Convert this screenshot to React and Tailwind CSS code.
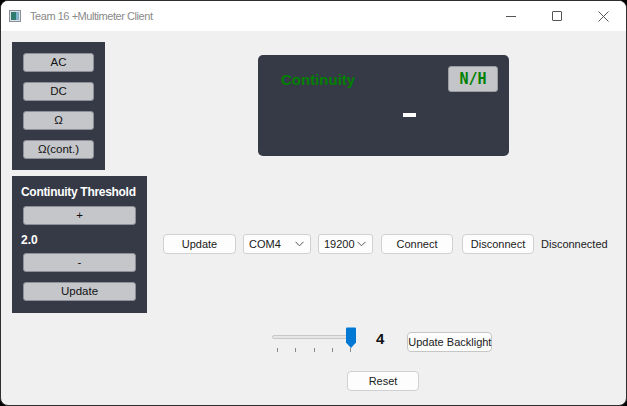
import React from "react";

const font = "font-['Liberation_Sans',Arial,sans-serif]";

function PanelButton({ children, w = "w-[71px]" }) {
  return (
    <div className={`${w} h-[19px] rounded-[3px] bg-[#c5c6ca] border border-[#8e9099] flex items-center justify-center text-[11.5px] text-[#111]`}>
      {children}
    </div>
  );
}

function WinButton({ children, w }) {
  return (
    <div className={`${w} h-[20px] rounded-[4px] bg-[#fdfdfd] border border-[#d0d0d0] flex items-center justify-center text-[11px] text-[#1a1a1a]`}>
      {children}
    </div>
  );
}

function Combo({ value, w }) {
  return (
    <div className={`${w} h-[20px] rounded-[3px] bg-[#fdfdfd] border border-[#d0d0d0] flex items-center justify-between pl-[5px] pr-[6px] text-[11px] text-[#1a1a1a]`}>
      <span>{value}</span>
      <svg width="9" height="6" viewBox="0 0 9 6" fill="none">
        <path d="M0.5 0.8 L4.5 4.8 L8.5 0.8" stroke="#555" strokeWidth="1" />
      </svg>
    </div>
  );
}

export default function App() {
  return (
    <div className={`w-[627px] h-[406px] bg-black ${font}`}>
      <div className="w-full h-full rounded-[8px] border border-[#2e2e2e] overflow-hidden flex flex-col bg-[#f0f0f0]">
        {/* title bar */}
        <div className="h-[30px] bg-white flex items-center shrink-0">
          <svg className="ml-[8px]" width="12" height="12" viewBox="0 0 12 12">
            <rect x="0.5" y="0.5" width="11" height="11" fill="#dfe3e8" stroke="#8a9099" />
            <rect x="2" y="2" width="5" height="8" fill="#2f7c6e" />
            <rect x="7" y="2" width="3" height="8" fill="#7fb1c9" />
          </svg>
          <span className="ml-[9px] text-[11px] tracking-[-0.45px] text-[#8a8a8a]">Team 16 +Multimeter Client</span>
          <div className="ml-auto flex items-center">
            <div className="w-[46px] h-[30px] flex items-center justify-center">
              <div className="w-[10px] h-px bg-[#555]" />
            </div>
            <div className="w-[46px] h-[30px] flex items-center justify-center">
              <div className="w-[10px] h-[10px] border border-[#555] rounded-[1px]" />
            </div>
            <div className="w-[46px] h-[30px] flex items-center justify-center">
              <svg width="11" height="11" viewBox="0 0 11 11">
                <path d="M0.5 0.5 L10.5 10.5 M10.5 0.5 L0.5 10.5" stroke="#555" strokeWidth="1" />
              </svg>
            </div>
          </div>
        </div>

        {/* body */}
        <div className="flex flex-1">
          {/* left column */}
          <div className="ml-[11px] mt-[11px] flex flex-col items-start gap-[6px]">
            <div className="w-[93px] h-[128px] bg-[#363a47] flex flex-col gap-[10px] pt-[11px] pl-[11px]">
              <PanelButton>AC</PanelButton>
              <PanelButton>DC</PanelButton>
              <PanelButton>Ω</PanelButton>
              <PanelButton>Ω(cont.)</PanelButton>
            </div>
            <div className="w-[135px] h-[137px] bg-[#363a47] flex flex-col pl-[11px] pt-[8px]">
              <div className="ml-[-2px] text-[12px] font-bold text-white leading-[16px] tracking-[-0.3px]">Continuity Threshold</div>
              <div className="mt-[6px]"><PanelButton w="w-[113px]">+</PanelButton></div>
              <div className="mt-[7px] text-[12px] font-bold text-white leading-[16px] ml-[-2px]">2.0</div>
              <div className="mt-[5px]"><PanelButton w="w-[113px]">-</PanelButton></div>
              <div className="mt-[10px]"><PanelButton w="w-[113px]">Update</PanelButton></div>
            </div>
          </div>

          {/* right area */}
          <div className="flex flex-col ml-[15px] mt-[24px]">
            <div className="ml-[96px] w-[251px] h-[101px] rounded-[5px] bg-[#363a47] flex flex-col">
              <div className="flex items-start">
                <span className="ml-[23px] mt-[15px] text-[15px] font-bold text-[#008000] leading-[20px]">Continuity</span>
                <div className="ml-auto mr-[11px] mt-[11px] w-[50px] h-[26px] rounded-[3px] bg-[#c4c5c8] border border-[#9a9ca3] flex items-center justify-center font-['DejaVu_Sans_Mono',monospace] font-bold text-[15px] text-[#008000]">
                  N/H
                </div>
              </div>
              <div className="ml-[145px] mt-[21px] w-[13px] h-[4px] bg-white" />
            </div>

            <div className="flex items-center mt-[78px] ml-[1px]">
              <WinButton w="w-[73px]">Update</WinButton>
              <div className="ml-[7px]"><Combo value="COM4" w="w-[68px]" /></div>
              <div className="ml-[7px]"><Combo value="19200" w="w-[55px]" /></div>
              <div className="ml-[8px]"><WinButton w="w-[72px]">Connect</WinButton></div>
              <div className="ml-[9px]"><WinButton w="w-[72px]">Disconnect</WinButton></div>
              <span className="ml-[7px] text-[11px] text-[#1a1a1a]">Disconnected</span>
            </div>

            <div className="flex items-start mt-[73px] ml-[110px]">
              <div className="relative w-[86px] h-[28px]">
                <div className="absolute left-0 top-[8px] w-[84px] h-[4px] rounded-full bg-[#e6e6e6] border border-[#c8c8c8]" />
                <svg className="absolute left-[73px] top-0" width="12" height="22" viewBox="0 0 12 22">
                  <path d="M1 1.5 Q1 0.5 2 0.5 H10 Q11 0.5 11 1.5 V15.5 L6 21 L1 15.5 Z" fill="#0078d4" />
                </svg>
                {[5, 23, 42, 60, 78].map((x) => (
                  <div key={x} className="absolute top-[21px] w-px h-[4px] bg-[#8a8a8a]" style={{ left: x }} />
                ))}
              </div>
              <span className="ml-[18px] mt-[2px] text-[15px] font-bold text-[#111] leading-[20px]">4</span>
              <div className="ml-[23px] mt-[5px] w-[85px] h-[20px] rounded-[4px] bg-[#fdfdfd] border border-[#c6c6c6] flex items-center justify-center text-[11px] text-[#1a1a1a] whitespace-nowrap">
                Update Backlight
              </div>
            </div>

            <div className="mt-[16px] ml-[185px]">
              <WinButton w="w-[72px]">Reset</WinButton>
            </div>
          </div>
        </div>
      </div>
    </div>
  );
}
